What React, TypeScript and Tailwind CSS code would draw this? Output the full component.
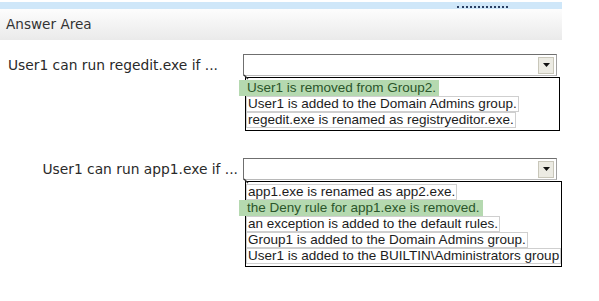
import React from "react";

type Item = { text: string; picked?: boolean };

const listOne: Item[] = [
  { text: "User1 is removed from Group2.", picked: true },
  { text: "User1 is added to the Domain Admins group." },
  { text: "regedit.exe is renamed as registryeditor.exe." },
];

const listTwo: Item[] = [
  { text: "app1.exe is renamed as app2.exe." },
  { text: "the Deny rule for app1.exe is removed.", picked: true },
  { text: "an exception is added to the default rules." },
  { text: "Group1 is added to the Domain Admins group." },
  { text: "User1 is added to the BUILTIN\\Administrators group" },
];

const Select = () => (
  <div className="flex h-[22px] w-[314px] items-center justify-end border border-t-[#6f6f6f] border-l-[#6f6f6f] border-r-[#a0a0a0] border-b-[#b8b8b8] bg-white pr-[2px]">
    <div className="flex h-[17px] w-[16px] items-center justify-center border border-[#c9c7ba] bg-[#ecebe3]">
      <svg width="7" height="4" viewBox="0 0 7 4">
        <path d="M0 0h7L3.5 4z" fill="#111" />
      </svg>
    </div>
  </div>
);

const DropList = ({ items, width }: { items: Item[]; width: string }) => (
  <div
    className={`relative ml-[2px] mt-[1px] flex flex-col items-start border border-black bg-white py-[2px] ${width}`}
  >
    <svg
      className="absolute -left-[3px] -top-[4px]"
      width="6"
      height="6"
      viewBox="0 0 6 6"
    >
      <path d="M1 1l4 4" stroke="#333" strokeWidth="1.3" />
    </svg>
    {items.map((it) =>
      it.picked ? (
        <div
          key={it.text}
          className="-ml-[7px] flex h-[16px] items-center whitespace-nowrap bg-[#b5d9b0] pl-[8px] pr-[3px] text-[#2a552a]"
        >
          {it.text}
        </div>
      ) : (
        <div
          key={it.text}
          className="flex h-[16px] items-center whitespace-nowrap border border-[#cfcfcf] px-[1px] text-[#1c1c1c]"
        >
          {it.text}
        </div>
      )
    )}
  </div>
);

const App = () => {
  return (
    <div className="h-[301px] w-[599px] overflow-hidden bg-white">
      <div className="w-[562px]">
        <div className="relative mt-[2px] h-[7px] bg-[#cfe7f9]">
          <div className="absolute left-[457px] top-[4px] w-[51px] border-b-2 border-dotted border-[#2b3f63]" />
        </div>
        <div
          className="flex h-[31px] items-center bg-gradient-to-b from-[#fdfdfd] to-[#eaeaea] pl-[6px] text-[13.6px] text-[#333]"
          style={{ fontFamily: '"DejaVu Sans", Verdana, sans-serif' }}
        >
          Answer Area
        </div>
      </div>

      <div
        className="mt-[14px] grid grid-cols-[243px_1fr] gap-y-[27px] text-[13.8px]"
        style={{ fontFamily: '"DejaVu Sans", Verdana, sans-serif' }}
      >
        <div className="flex h-[22px] items-center pl-[8px] text-[#2a2a2a]">
          User1 can run regedit.exe if ...
        </div>
        <div
          className="text-[13.5px]"
          style={{ fontFamily: '"Liberation Sans", Arial, sans-serif' }}
        >
          <Select />
          <DropList items={listOne} width="w-[315px]" />
        </div>

        <div className="flex h-[22px] items-center justify-end pr-[5px] text-[#2a2a2a]">
          User1 can run app1.exe if ...
        </div>
        <div
          className="text-[13.5px]"
          style={{ fontFamily: '"Liberation Sans", Arial, sans-serif' }}
        >
          <Select />
          <DropList items={listTwo} width="w-[317px]" />
        </div>
      </div>
    </div>
  );
};

export default App;
